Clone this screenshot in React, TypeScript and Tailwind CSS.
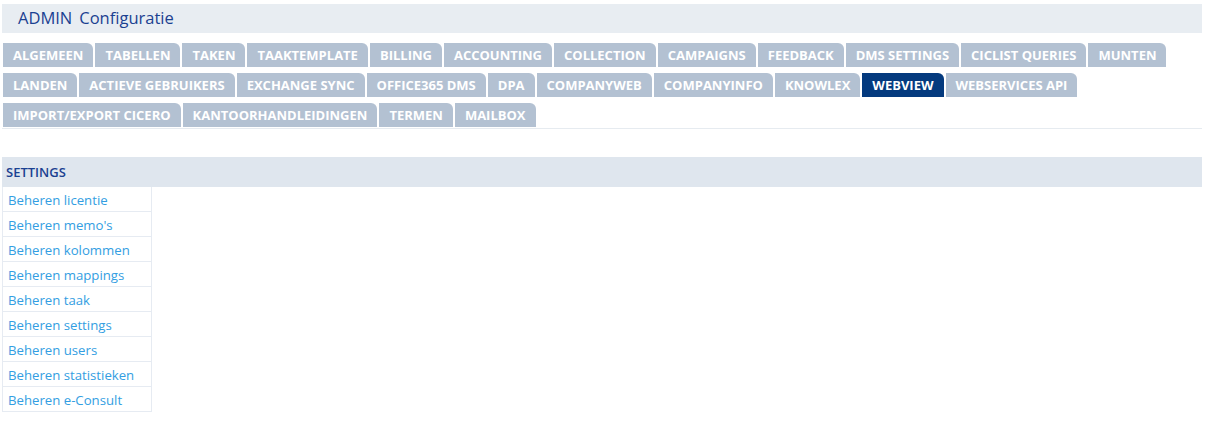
import React from "react";

const tabRows: string[][] = [
  [
    "ALGEMEEN",
    "TABELLEN",
    "TAKEN",
    "TAAKTEMPLATE",
    "BILLING",
    "ACCOUNTING",
    "COLLECTION",
    "CAMPAIGNS",
    "FEEDBACK",
    "DMS SETTINGS",
    "CICLIST QUERIES",
    "MUNTEN",
  ],
  [
    "LANDEN",
    "ACTIEVE GEBRUIKERS",
    "EXCHANGE SYNC",
    "OFFICE365 DMS",
    "DPA",
    "COMPANYWEB",
    "COMPANYINFO",
    "KNOWLEX",
    "WEBVIEW",
    "WEBSERVICES API",
  ],
  ["IMPORT/EXPORT CICERO", "KANTOORHANDLEIDINGEN", "TERMEN", "MAILBOX"],
];

const settings = [
  "Beheren licentie",
  "Beheren memo's",
  "Beheren kolommen",
  "Beheren mappings",
  "Beheren taak",
  "Beheren settings",
  "Beheren users",
  "Beheren statistieken",
  "Beheren e-Consult",
];

function Tab({ label, active }: { label: string; active?: boolean }) {
  return (
    <div
      className={
        "h-6 px-[10px] pt-px flex items-center rounded-tr-[6px] text-[13px] font-bold text-white whitespace-nowrap " +
        (active ? "bg-[#043a7e]" : "bg-[#b3c1d2]")
      }
    >
      {label}
    </div>
  );
}

export default function App() {
  return (
    <div
      className="w-[1210px] h-[427px] bg-white pt-1 px-[2px]"
      style={{ fontFamily: '"Open Sans", "Noto Sans", sans-serif' }}
    >
      <div className="w-[1200px]">
        <div className="h-[29px] bg-[#e8edf2] flex items-center pl-4 text-[16.5px] text-[#1b4191]">
          <span>ADMIN</span>
          <span className="ml-[7px]">Configuratie</span>
        </div>

        <div className="mt-[10px] pl-px flex flex-col gap-[6px]">
          {tabRows.map((row, i) => (
            <div key={i} className="flex gap-[2px]">
              {row.map((t) => (
                <Tab key={t} label={t} active={t === "WEBVIEW"} />
              ))}
            </div>
          ))}
        </div>
        <div className="mt-px h-px bg-[#e6ebf0]" />

        <div className="mt-[28px] h-[30px] bg-[#dfe6ee] flex items-center pl-1 pt-[2px] text-[13px] font-semibold text-[#1b4191]">
          SETTINGS
        </div>
        <div className="w-[150px] border-x border-[#e6ebf2]">
          {settings.map((s) => (
            <div
              key={s}
              className="h-[25px] flex items-center pl-[5px] pt-[3px] border-b border-[#e6ebf2] text-[13.2px] text-[#339ee2]"
            >
              {s}
            </div>
          ))}
        </div>
      </div>
    </div>
  );
}
